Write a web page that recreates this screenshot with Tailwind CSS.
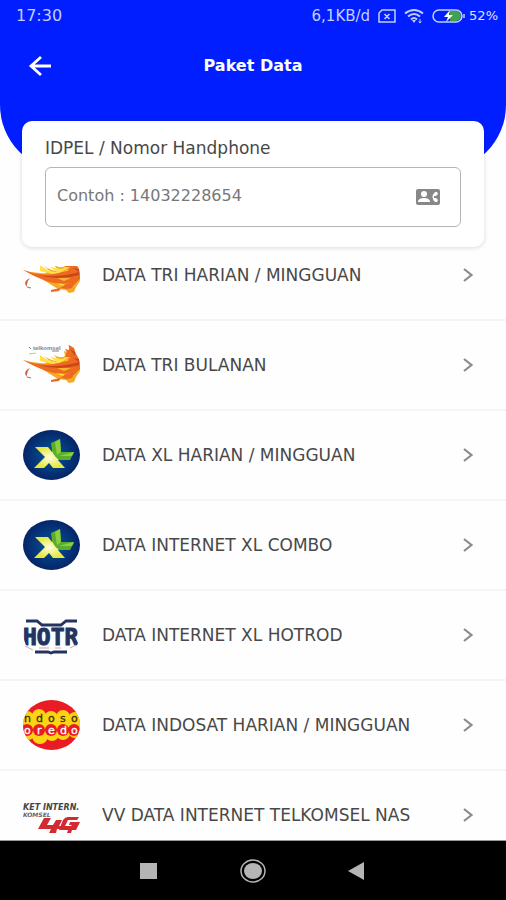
<!DOCTYPE html>
<html lang="id">
<head>
    <meta charset="UTF-8">
    <meta name="viewport" content="width=device-width, initial-scale=1.0">
    <title>Paket Data</title>
    <script src="https://cdn.jsdelivr.net/npm/@tailwindcss/browser@4"></script>
</head>
<body class="bg-[#fefefe] font-['DejaVu_Sans',sans-serif] text-base text-[#484848]">
    <!-- Shared drawings -->
    <svg class="absolute size-0" aria-hidden="true">
        <defs>
            <radialGradient id="xl-blue"><stop offset="0" stop-color="#07559b"/><stop offset="1" stop-color="#052568"/></radialGradient>
            <radialGradient id="xl-yellow"><stop offset="0" stop-color="#fffde0"/><stop offset="1" stop-color="#e6e83a"/></radialGradient>
            <clipPath id="hot-clip"><path d="M0 15h57v13l-3 7-5 6H10L3 35 0 27z"/></clipPath>
            <clipPath id="indo-clip"><ellipse cx="28.500" cy="25" rx="28.500" ry="25"/></clipPath>
        </defs>
        <symbol id="chevron" viewBox="0 0 12 18">
            <path d="M2 3l7.500 6-7.500 6" fill="none" stroke="#8b8b8b" stroke-width="2.200"/>
        </symbol>
        <symbol id="flame" viewBox="0 0 57 50">
            <path d="M0 20q12 4 24 3l-8-4 12 3-7-6q9 6 15 5l-5-6q7 4 11 1l-1-5 4 1q3-2 0-7l6 4 3 8 3 5v9l-4 6-2 5-5 1-3-3-8-1-8-5-8-5Q12 26 0 20z" fill="#f7a823"/>
            <path d="M17 15q9 7 17 7l-7-5 12 2q5-2 6-5l-1 8-14 2-13-3zM27 29q9 1 16 7l-6-1-7-4z" fill="#ffe04a"/>
            <path d="M0 20q17 6 30 4 10-1 18-7l-6 0 2-5-2-3 4 1 0-5 5 3 2 6 3 5 1 8-4 6q-2 3-9 3l4-3q-14 2-25-2Q10 26 0 20z" fill="#ec6b21"/>
            <path d="M15 25q22 3 41-3v3q-20 6-41 0zM47 9l5 3v4zM50 18l6 1v3z" fill="#cc4419"/>
            <path d="M34 28l14 0-7 3zM38 22l8-5-1 4z" fill="#fbb52c"/>
            <path d="M28 40l9-2 6-4 9-2-3 6-5 1-6-1-2 3-8 1z" fill="#ec6b21"/>
            <path d="M7 28q-8 4-3 9 -1-5 3-9z" fill="#cf5b43"/>
            <path d="M4 37l4 1M54 31l3-3" stroke="#7c7c8c"/>
            <path d="M6 14l7-1" stroke="#b5d75c"/>
            <path d="M6 7l2 2M29 11l7 0" stroke="#8a7a7a"/>
        </symbol>
        <symbol id="xl" viewBox="0 0 57 50">
            <ellipse cx="28.500" cy="25" rx="28.500" ry="25" fill="url(#xl-blue)"/>
            <path d="M12 17h13l4 5 5-4 5 9-4 3 7 8H30l-4-5-5 5H11l11-11z" fill="url(#xl-yellow)"/>
            <path d="M28 13l9-4 1 13 13 0-4 8H37q-5-2-8-9z" fill="#5bae2d"/>
            <path d="M32 12l5-3 1 13-4 3zM36 26l15-4-2 4z" fill="#8fcf3f"/>
        </symbol>
    </svg>

    <div class="flex h-screen flex-col overflow-hidden">
        <!-- Header -->
        <header class="h-[171px] shrink-0 rounded-b-[66px] bg-[#001eff]">
            <div class="flex h-8 items-center justify-between pr-2 pl-4 text-[#c4cdff]">
                <span>17:30</span>
                <div class="flex items-center gap-2">
                    <span class="text-[15px]">6,1KB/d</span>
                    <svg class="h-[14px] w-[18px]" viewBox="0 0 18 14" fill="none" stroke="currentColor" stroke-width="1.500">
                        <path d="M4 1h13v12H1V4zM6.500 5l5 5M11.500 5l-5 5"/>
                    </svg>
                    <svg class="h-4 w-5" viewBox="0 0 20 16" fill="none" stroke="currentColor" stroke-width="2">
                        <path d="M1 5.500q9-7 18 0M4 8.500q6-5 12 0M7 11.500q3-3 6 0"/>
                        <path d="M8 12h4L10 15z" fill="currentColor" stroke="none"/>
                        <path d="M16 11v4M14.500 13.500L16 15l1.500-1.500" stroke-width="1"/>
                    </svg>
                    <div class="flex items-center gap-1">
                        <svg class="h-[14px] w-[33px]" viewBox="0 0 33 14">
                            <path d="M18 2h6a5 5 0 010 10h-6z" fill="#3fa24c"/>
                            <rect x="1" y="1" width="29" height="12" rx="6" fill="none" stroke="currentColor" stroke-width="1.500"/>
                            <path d="M32 5v4" stroke="currentColor" stroke-width="1.500"/>
                            <path d="M18 1l-6 7h4l-2 5 7-7h-4z" fill="#fff"/>
                        </svg>
                        <span class="text-[13px] text-[#dfe4ff]">52%</span>
                    </div>
                </div>
            </div>
            <div class="grid h-[67px] grid-cols-[1fr_auto_1fr] items-center px-7 text-white">
                <button type="button" aria-label="Kembali" class="w-6">
                    <svg class="h-[22px] w-6" viewBox="0 0 24 22" fill="none" stroke="currentColor" stroke-width="2.800">
                        <path d="M13 2L3 11 13 20M3 11H23"/>
                    </svg>
                </button>
                <h1 class="font-bold">Paket Data</h1>
            </div>
        </header>

        <!-- Customer number -->
        <section class="z-10 mx-[22px] -mt-[50px] shrink-0 rounded-[10px] bg-white px-[23px] pt-[15px] pb-5 shadow-[0_1px_5px_rgba(0,0,0,0.14)]">
            <label for="idpel" class="block text-[17px] leading-6">IDPEL / Nomor Handphone</label>
            <div class="mt-[7px] flex h-[60px] items-center rounded-md border border-[#b5b5b5] pr-5 pl-[11px]">
                <input id="idpel" type="text" placeholder="Contoh : 14032228654" class="h-full min-w-0 flex-1 pb-1 outline-none placeholder:text-[#777]">
                <button type="button" aria-label="Pilih kontak">
                    <svg class="h-4 w-6" viewBox="0 0 24 16">
                        <rect width="24" height="16" rx="2" fill="#888"/>
                        <circle cx="8" cy="5" r="3" fill="#fff"/>
                        <path d="M2 13v-1q1-3 6-3t6 3v1z" fill="#fff"/>
                        <path d="M21 3h-2q-5 5 0 10h2l1-2-2-2h-2V7h2l2-2z" fill="#fff"/>
                    </svg>
                </button>
            </div>
        </section>

        <!-- Package list -->
        <main class="mt-[19px] min-h-0 flex-1 overflow-hidden">
            <ul class="-mt-[35px] text-[17px] leading-4 whitespace-nowrap">
                <li class="border-b-2 border-[#f5f5f5]">
                    <a href="#" class="flex h-[88px] items-center pr-8 pl-[23px]">
                        <svg class="mr-[22px] h-[50px] w-[57px]"><use href="#flame"/></svg>
                        <span class="flex-1">DATA TRI HARIAN / MINGGUAN</span>
                        <svg class="h-[18px] w-3"><use href="#chevron"/></svg>
                    </a>
                </li>
                <li class="border-b-2 border-[#f5f5f5]">
                    <a href="#" class="flex h-[88px] items-center pr-8 pl-[23px]">
                        <svg class="mr-[22px] h-[50px] w-[57px]" viewBox="0 0 57 50">
                            <use href="#flame"/>
                            <text x="10" y="10" font-size="6" font-weight="bold" font-family="Liberation Sans, sans-serif" fill="#7c858d">telkomsel</text>
                        </svg>
                        <span class="flex-1">DATA TRI BULANAN</span>
                        <svg class="h-[18px] w-3"><use href="#chevron"/></svg>
                    </a>
                </li>
                <li class="border-b-2 border-[#f5f5f5]">
                    <a href="#" class="flex h-[88px] items-center pr-8 pl-[23px]">
                        <svg class="mr-[22px] h-[50px] w-[57px]"><use href="#xl"/></svg>
                        <span class="flex-1">DATA XL HARIAN / MINGGUAN</span>
                        <svg class="h-[18px] w-3"><use href="#chevron"/></svg>
                    </a>
                </li>
                <li class="border-b-2 border-[#f5f5f5]">
                    <a href="#" class="flex h-[88px] items-center pr-8 pl-[23px]">
                        <svg class="mr-[22px] h-[50px] w-[57px]"><use href="#xl"/></svg>
                        <span class="flex-1">DATA INTERNET XL COMBO</span>
                        <svg class="h-[18px] w-3"><use href="#chevron"/></svg>
                    </a>
                </li>
                <li class="border-b-2 border-[#f5f5f5]">
                    <a href="#" class="flex h-[88px] items-center pr-8 pl-[23px]">
                        <svg class="mr-[22px] h-[50px] w-[57px]" viewBox="0 0 57 50">
                            <g clip-path="url(#hot-clip)">
                                <text x="0" y="35" font-size="23" font-weight="bold" font-family="DejaVu Sans Mono, monospace" fill="#22345f" stroke="#22345f" stroke-width="1">HOTR</text>
                            </g>
                            <path d="M2 36l8 4M16 38h10M32 38h6M47 38l6-3" stroke="#d8a0ac"/>
                            <path d="M3 11h11l5 4h19l5-4h11M12 42h13l3 1 3-1h13" fill="none" stroke="#22345f" stroke-width="2.800"/>
                        </svg>
                        <span class="flex-1">DATA INTERNET XL HOTROD</span>
                        <svg class="h-[18px] w-3"><use href="#chevron"/></svg>
                    </a>
                </li>
                <li class="border-b-2 border-[#f5f5f5]">
                    <a href="#" class="flex h-[88px] items-center pr-8 pl-[23px]">
                        <svg class="mr-[22px] h-[50px] w-[57px]" viewBox="0 0 57 50">
                            <g clip-path="url(#indo-clip)">
                                <path d="M0 0h57v50H0z" fill="#e91c25"/>
                                <g fill="#fbd413">
                                    <circle cx="4" cy="18" r="7"/><circle cx="16" cy="16" r="7"/><circle cx="28" cy="18" r="7"/><circle cx="40" cy="17" r="7"/><circle cx="52" cy="19" r="7"/>
                                    <path d="M0 18h57v15H0z"/>
                                    <circle cx="5" cy="33" r="7"/><circle cx="17" cy="36" r="8"/><circle cx="29" cy="34" r="7"/><circle cx="40" cy="33" r="7"/><circle cx="52" cy="31" r="7"/>
                                </g>
                                <g fill="#e91c25">
                                    <circle cx="4" cy="30" r="6"/><circle cx="16" cy="30" r="6"/><circle cx="28" cy="30" r="6"/><circle cx="40" cy="30" r="6"/><circle cx="51" cy="30" r="6"/>
                                </g>
                                <g font-family="DejaVu Sans, sans-serif" font-size="11" stroke-width=".3">
                                    <text x="1 13 25 37 48" y="22" fill="#3d3009" stroke="#3d3009">ndoso</text>
                                    <text x="1 14 25 37 48" y="34" fill="#fff" stroke="#fff">oredo</text>
                                </g>
                            </g>
                        </svg>
                        <span class="flex-1">DATA INDOSAT HARIAN / MINGGUAN</span>
                        <svg class="h-[18px] w-3"><use href="#chevron"/></svg>
                    </a>
                </li>
                <li class="border-b-2 border-[#f5f5f5]">
                    <a href="#" class="flex h-[88px] items-center pr-8 pl-[23px]">
                        <svg class="mr-[22px] h-[50px] w-[57px]" viewBox="0 0 57 50">
                            <g font-family="DejaVu Sans, sans-serif" font-style="italic" font-weight="bold">
                                <text x="0" y="20" font-size="8" fill="#454545">KET INTERN.</text>
                                <text x="0" y="27" font-size="6" fill="#666">KOMSEL</text>
                            </g>
                            <path d="M21 28h7l-4 7h6l3-5h6l-3 6h4l-1 3h-5l-1 4h-7l2-4H15z" fill="#d32931"/>
                            <path d="M56 27l-2 3H45l-3 6h6l1-1h-3l1-3h10l-4 8h-4l-1 3h-4l1-3h-9l4-10q2-3 5-3z" fill="#d32931"/>
                        </svg>
                        <span class="flex-1">VV DATA INTERNET TELKOMSEL NAS</span>
                        <svg class="h-[18px] w-3"><use href="#chevron"/></svg>
                    </a>
                </li>
            </ul>
        </main>

        <!-- Android navigation -->
        <nav class="flex h-[60px] shrink-0 items-center justify-center gap-20 border-t border-[#999] bg-black text-[#b5b5b5]">
            <button type="button" aria-label="Aplikasi terbaru">
                <svg class="h-[26px] w-[26px]" viewBox="0 0 26 26" fill="currentColor"><path d="M6 5h17v16H6z"/></svg>
            </button>
            <button type="button" aria-label="Beranda">
                <svg class="h-[26px] w-[26px]" viewBox="0 0 26 26" fill="currentColor">
                    <ellipse cx="13" cy="13" rx="12" ry="11" fill="none" stroke="currentColor" stroke-width="1.500"/>
                    <ellipse cx="13" cy="13" rx="9" ry="8"/>
                </svg>
            </button>
            <button type="button" aria-label="Kembali ke layar sebelumnya">
                <svg class="h-[26px] w-[26px]" viewBox="0 0 26 26" fill="currentColor"><path d="M2 13l16-9v18z"/></svg>
            </button>
        </nav>
    </div>
</body>
</html>
